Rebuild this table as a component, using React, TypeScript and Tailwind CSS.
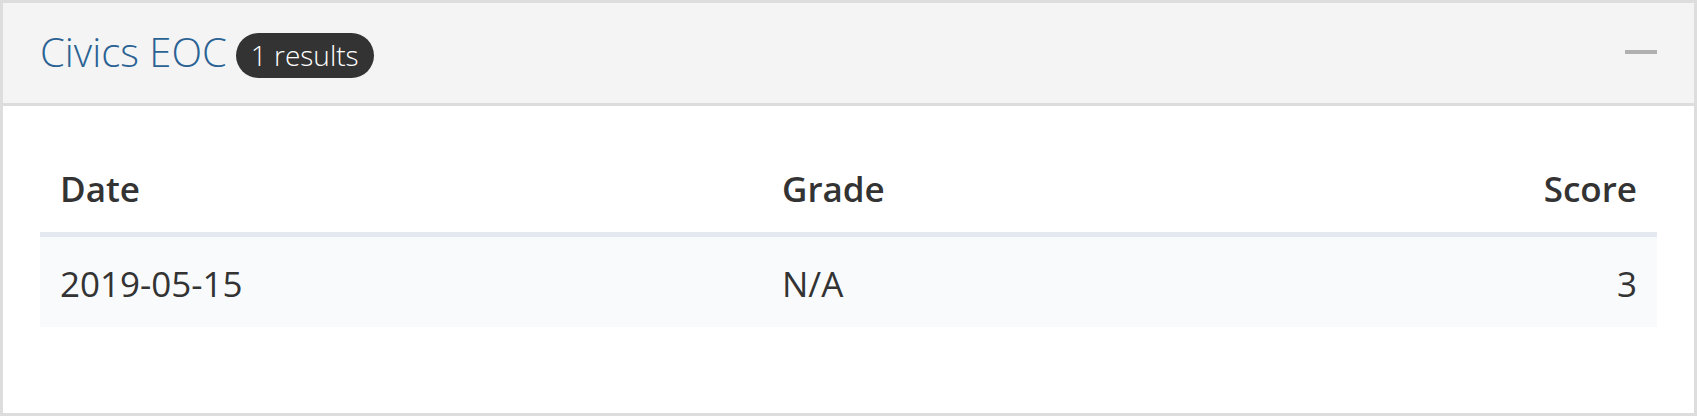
import React from 'react';

const rows = [{ date: '2019-05-15', grade: 'N/A', score: '3' }];

const App = () => {
  return (
    <div className="w-[1700px] h-[417px] bg-white" style={{ fontFamily: '"Open Sans", sans-serif' }}>
      <div className="w-[1697px] h-[416px] border-[3px] border-[#dddddd] flex flex-col">
        {/* panel heading */}
        <div className="h-[103px] shrink-0 bg-[#f4f4f4] border-b-[3px] border-[#dddddd] flex items-center justify-between pl-[37px] pr-[37px]">
          <div className="flex items-center">
            <h2 className="text-[40px] leading-none font-light text-[#2a6293] mb-[2px]">Civics EOC</h2>
            <span className="ml-[9px] mt-[4px] h-[45px] px-[15px] rounded-full bg-[#333333] text-white text-[28px] font-light flex items-center">
              1 results
            </span>
          </div>
          <div className="w-[32px] h-[4px] bg-[#b0b0b0] mb-[3px]" />
        </div>

        {/* panel body */}
        <div className="flex-1 px-[37px] pt-[34px]">
          <table className="w-full border-collapse text-[35px] leading-[51px] text-[#333333]">
            <thead>
              <tr className="border-b-[5px] border-[#e4e9ef]">
                <th className="w-[722px] text-left font-semibold px-[20px] pt-[23px] pb-[18px]">Date</th>
                <th className="text-left font-semibold px-[20px] pt-[23px] pb-[18px]">Grade</th>
                <th className="text-right font-semibold px-[20px] pt-[23px] pb-[18px]">Score</th>
              </tr>
            </thead>
            <tbody>
              {rows.map((r) => (
                <tr key={r.date} className="bg-[#f9fafc]">
                  <td className="px-[20px] pt-[21px] pb-[18px]">{r.date}</td>
                  <td className="px-[20px] pt-[21px] pb-[18px]">{r.grade}</td>
                  <td className="px-[20px] pt-[21px] pb-[18px] text-right">{r.score}</td>
                </tr>
              ))}
            </tbody>
          </table>
        </div>
      </div>
    </div>
  );
};

export default App;
